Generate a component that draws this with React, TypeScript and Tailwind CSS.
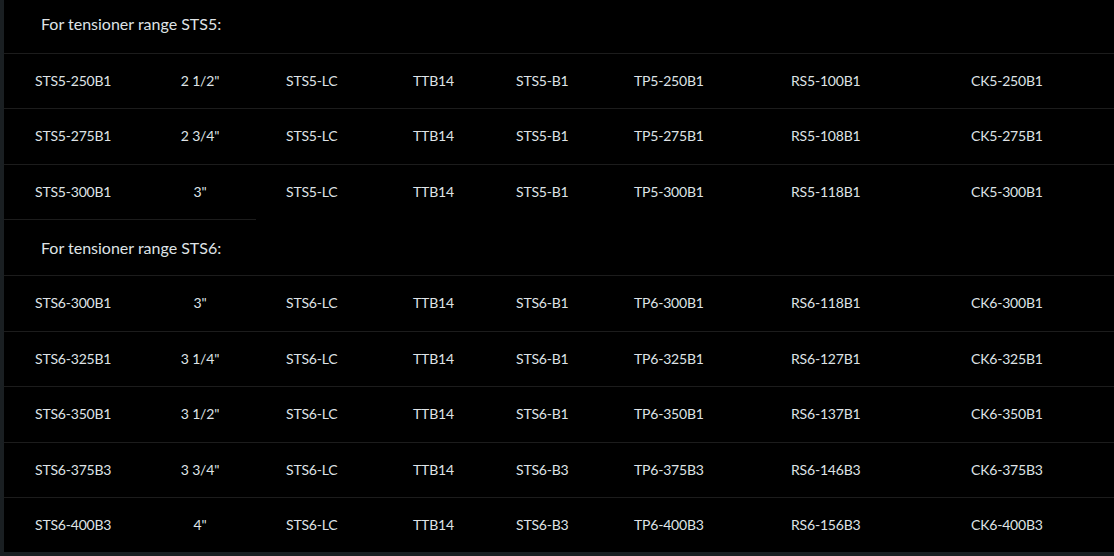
const cols = ["w-[140px] pl-[31px]", "w-[112px] text-center", "w-[127px] pl-[30px]", "w-[103px] pl-[30px]", "w-[118px] pl-[30px]", "w-[157px] pl-[30px]", "w-[180px] pl-[30px]", "flex-1 pl-[30px]"];

const sts5 = [
  ["STS5-250B1", "2 1/2\"", "STS5-LC", "TTB14", "STS5-B1", "TP5-250B1", "RS5-100B1", "CK5-250B1"],
  ["STS5-275B1", "2 3/4\"", "STS5-LC", "TTB14", "STS5-B1", "TP5-275B1", "RS5-108B1", "CK5-275B1"],
  ["STS5-300B1", "3\"", "STS5-LC", "TTB14", "STS5-B1", "TP5-300B1", "RS5-118B1", "CK5-300B1"],
];

const sts6 = [
  ["STS6-300B1", "3\"", "STS6-LC", "TTB14", "STS6-B1", "TP6-300B1", "RS6-118B1", "CK6-300B1"],
  ["STS6-325B1", "3 1/4\"", "STS6-LC", "TTB14", "STS6-B1", "TP6-325B1", "RS6-127B1", "CK6-325B1"],
  ["STS6-350B1", "3 1/2\"", "STS6-LC", "TTB14", "STS6-B1", "TP6-350B1", "RS6-137B1", "CK6-350B1"],
  ["STS6-375B3", "3 3/4\"", "STS6-LC", "TTB14", "STS6-B3", "TP6-375B3", "RS6-146B3", "CK6-375B3"],
  ["STS6-400B3", "4\"", "STS6-LC", "TTB14", "STS6-B3", "TP6-400B3", "RS6-156B3", "CK6-400B3"],
];

const Row = ({ cells, h }: { cells: string[]; h: string }) => (
  <div className={`flex items-center border-t border-[#1c1c1c] pb-[2px] ${h}`}>
    {cells.map((c, i) => (
      <div key={i} className={cols[i]}>{c}</div>
    ))}
  </div>
);

export default function App() {
  return (
    <div className="w-[1114px] h-[556px] bg-[#1a1f22] pl-[4px] pb-[4px] overflow-hidden">
      <div className="bg-black h-[552px] text-[14px] text-[#dfe3e6] font-['Lato',sans-serif] tracking-[-0.2px]">
        <div className="h-[53px] flex items-center pl-[37px] pb-[5px] text-[16px] tracking-normal">For tensioner range STS5:</div>
        <Row cells={sts5[0]} h="h-[55px]" />
        <Row cells={sts5[1]} h="h-[56px]" />
        <Row cells={sts5[2]} h="h-[55px]" />
        <div className="h-[56px] w-[252px] flex items-center pl-[37px] border-t border-[#1c1c1c] text-[16px] tracking-normal">For tensioner range STS6:</div>
        <Row cells={sts6[0]} h="h-[56px]" />
        <Row cells={sts6[1]} h="h-[55px]" />
        <Row cells={sts6[2]} h="h-[56px]" />
        <Row cells={sts6[3]} h="h-[55px]" />
        <Row cells={sts6[4]} h="h-[55px]" />
      </div>
    </div>
  );
}
